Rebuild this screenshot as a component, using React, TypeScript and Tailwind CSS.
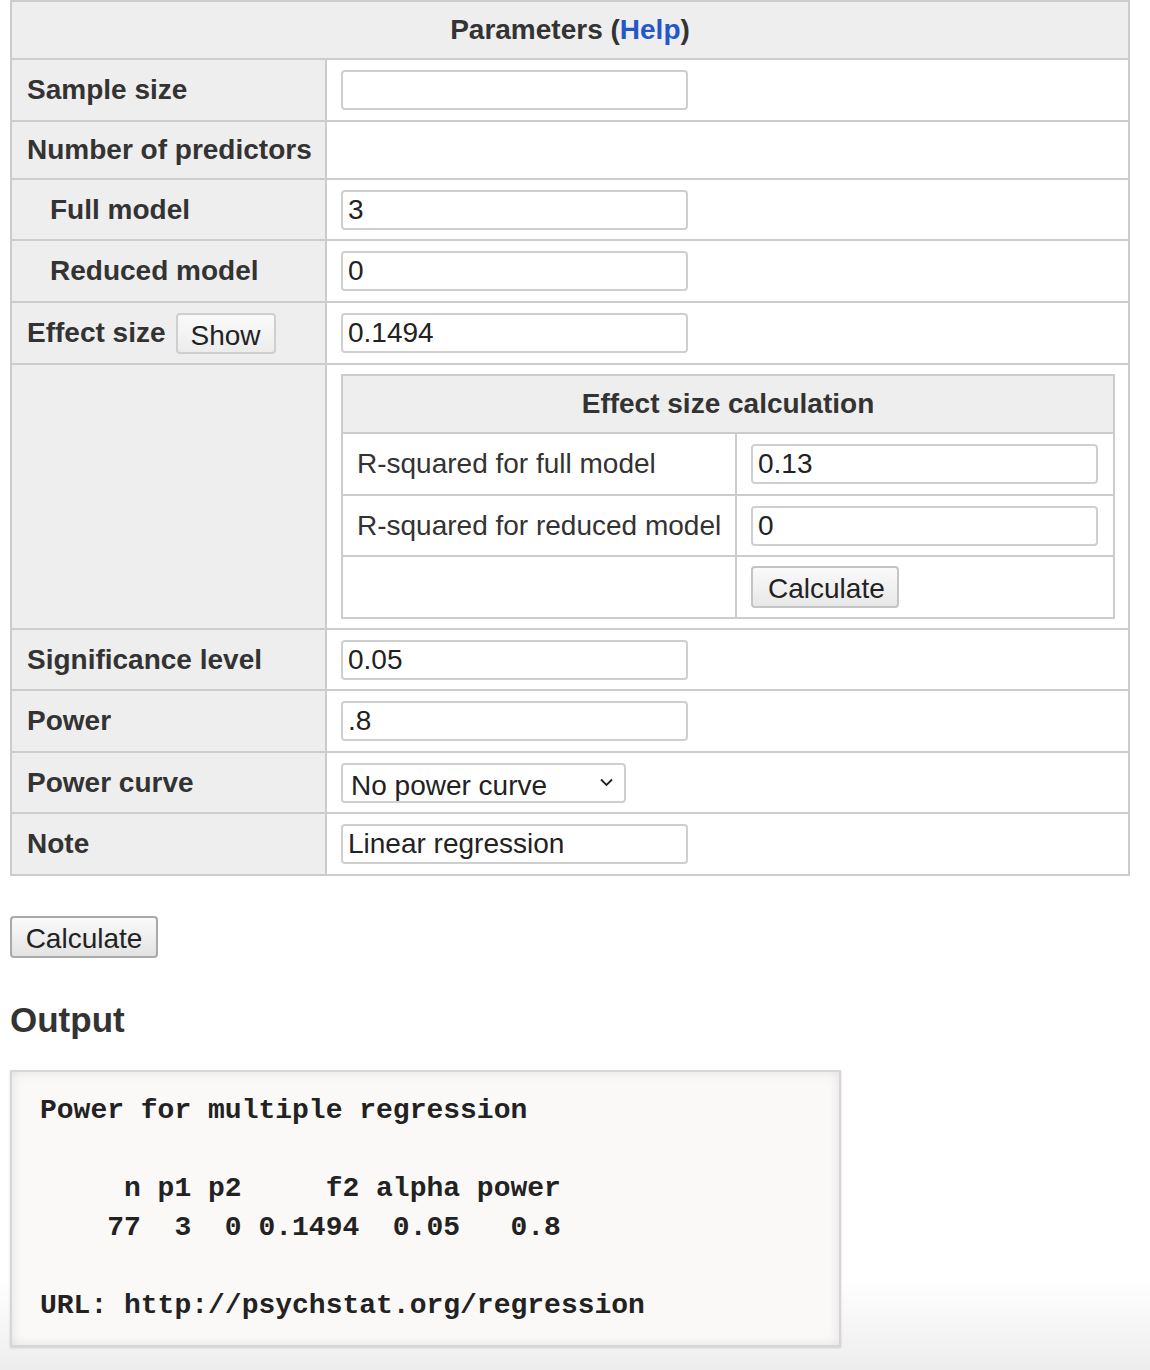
import type { ReactNode } from 'react'

const INPUT = 'w-[347px] h-[40px] px-[5px] border-2 border-[#cfcfcf] rounded-[4px] bg-white text-[28px] text-[#222] outline-none'
const BUTTON = 'h-[42px] px-[15px] rounded-[4px] border-2 border-[#c4c4c4] bg-[linear-gradient(#fafafa,#e8e8e8)] text-[28px] text-[#222]'

function Row({ label, h, indent, last, children }: {
  label: ReactNode; h: string; indent?: boolean; last?: boolean; children?: ReactNode
}) {
  return (
    <div className={`grid grid-cols-[315px_1fr] ${h} ${last ? '' : 'border-b-2 border-[#ccc]'}`}>
      <div className={`flex items-center bg-[#eee] border-r-2 border-[#ccc] font-bold ${indent ? 'pl-[38px]' : 'pl-[15px]'}`}>
        {label}
      </div>
      <div className="flex items-center pl-[14px]">{children}</div>
    </div>
  )
}

function Field({ value }: { value: string }) {
  return <input className={INPUT} defaultValue={value} />
}

function EffectCalc() {
  return (
    <div className="w-[774px] border-2 border-[#ccc]">
      <div className="h-[58px] flex items-center justify-center bg-[#eee] font-bold border-b-2 border-[#ccc]">
        Effect size calculation
      </div>
      {[
        { label: 'R-squared for full model', value: '0.13', h: 'h-[62px]' },
        { label: 'R-squared for reduced model', value: '0', h: 'h-[61px]' },
      ].map(r => (
        <div key={r.label} className={`grid grid-cols-[394px_1fr] ${r.h} border-b-2 border-[#ccc]`}>
          <div className="flex items-center pl-[14px] border-r-2 border-[#ccc]">{r.label}</div>
          <div className="flex items-center pl-[14px]"><Field value={r.value} /></div>
        </div>
      ))}
      <div className="grid grid-cols-[394px_1fr] h-[60px]">
        <div className="border-r-2 border-[#ccc]" />
        <div className="flex items-center pl-[14px]">
          <button className={`${BUTTON} w-[148px]`}>Calculate</button>
        </div>
      </div>
    </div>
  )
}

const OUTPUT = `Power for multiple regression

     n p1 p2     f2 alpha power
    77  3  0 0.1494  0.05   0.8

URL: http://psychstat.org/regression`

export default function App() {
  return (
    <div className="min-h-[1370px] bg-[linear-gradient(to_bottom,#fff_0,#fff_1280px,#ededed_1370px)] text-[28px] text-[#333] font-['Liberation_Sans',Arial,sans-serif]">
      <div className="ml-[10px] w-[1120px] border-2 border-[#ccc]">
        <div className="h-[58px] flex items-center justify-center bg-[#eee] font-bold border-b-2 border-[#ccc]">
          Parameters (<a href="#" className="text-[#2357c9]">Help</a>)
        </div>
        <Row label="Sample size" h="h-[62px]"><Field value="" /></Row>
        <Row label="Number of predictors" h="h-[58px]" />
        <Row label="Full model" h="h-[61px]" indent><Field value="3" /></Row>
        <Row label="Reduced model" h="h-[62px]" indent><Field value="0" /></Row>
        <Row
          h="h-[62px]"
          label={<>Effect size<button className="ml-[10px] h-[41px] w-[100px] rounded-[4px] border-2 border-[#cfcfcf] bg-[linear-gradient(#fafafa,#ececec)] font-normal text-[#222]">Show</button></>}
        >
          <Field value="0.1494" />
        </Row>
        <div className="grid grid-cols-[315px_1fr] h-[265px] border-b-2 border-[#ccc]">
          <div className="bg-[#eee] border-r-2 border-[#ccc]" />
          <div className="pl-[14px] pt-[9px]"><EffectCalc /></div>
        </div>
        <Row label="Significance level" h="h-[61px]"><Field value="0.05" /></Row>
        <Row label="Power" h="h-[62px]"><Field value=".8" /></Row>
        <Row label="Power curve" h="h-[61px]">
          <div className="relative w-[285px] h-[40px]">
            <select className="appearance-none w-full h-full pl-[8px] border-2 border-[#cfcfcf] rounded-[4px] bg-white text-[28px] text-[#222] outline-none">
              <option>No power curve</option>
              <option>Show power curve</option>
            </select>
            <svg className="absolute right-[13px] top-[15px] pointer-events-none" width="13" height="9" viewBox="0 0 13 9" fill="none">
              <path d="M1 1.5l5.5 5.5 5.5-5.5" stroke="#222" strokeWidth="1.8" />
            </svg>
          </div>
        </Row>
        <Row label="Note" h="h-[60px]" last><Field value="Linear regression" /></Row>
      </div>

      <div className="ml-[10px] mt-[40px]">
        <button className="h-[42px] w-[148px] rounded-[4px] border-2 border-[#a9a9a9] bg-[linear-gradient(#fafafa,#e3e3e3)] text-[28px] text-[#222]">
          Calculate
        </button>
      </div>

      <h2 className="ml-[10px] mt-[42px] text-[35px] leading-none font-bold text-[#333]">Output</h2>

      <pre className="ml-[10px] mt-[33px] w-[831px] h-[277px] px-[28px] py-[19px] border-2 border-[#d6d6d6] bg-[#faf9f8] shadow-[inset_0_0_12px_rgba(0,0,0,0.10),0_1px_2px_rgba(0,0,0,0.15)] font-['Liberation_Mono','Courier_New',monospace] font-bold text-[28px] leading-[39px] text-[#222]">
        {OUTPUT}
      </pre>
    </div>
  )
}
